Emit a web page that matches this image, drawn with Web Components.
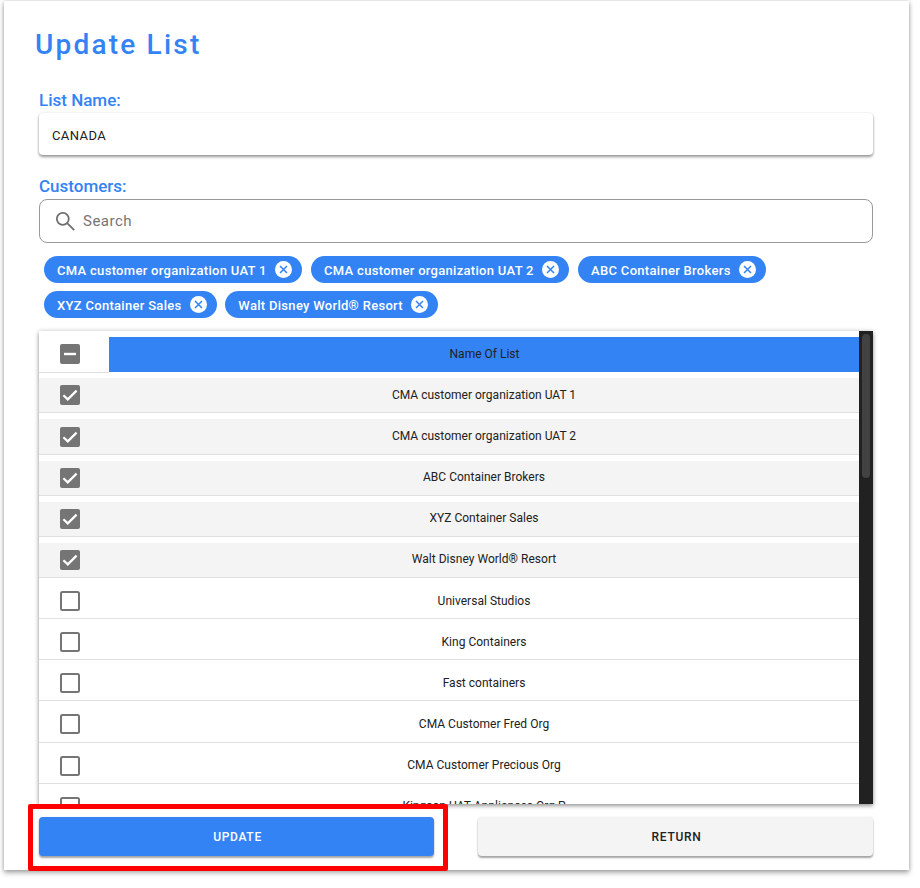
<!DOCTYPE html>
<html>
<head>
<meta charset="utf-8">
<title>Update List</title>
<style>
  html, body { margin: 0; padding: 0; background: #fff; font-family: Roboto, sans-serif; }
</style>
</head>
<body>
<update-panel></update-panel>
<script>
const BLUE = '#3483f5';

class UpdatePanel extends HTMLElement {
  constructor() {
    super();
    this.attachShadow({ mode: 'open' });
    this.shadowRoot.innerHTML = `
      <style>
        :host { display: block; width: 920px; height: 888px; overflow: hidden; position: relative; }
        .paper {
          box-sizing: border-box;
          width: 905px;
          height: 869px;
          margin: 1px 0 0 4px;
          padding: 29px 36px 0 35px;
          background: #fff;
          box-shadow: 0 3px 5px rgba(0,0,0,.3), 0 0 4px rgba(0,0,0,.2);
        }
        h1 {
          margin: 0 0 0 -4px;
          height: 30px;
          line-height: 30px;
          font-size: 28px;
          font-weight: 500;
          letter-spacing: 2.2px;
          color: ${BLUE};
        }
        label {
          display: block;
          font-size: 17px;
          font-weight: 500;
          line-height: 18px;
          color: ${BLUE};
        }
        .name-label { margin-top: 31px; }
        .cust-label { margin-top: 22px; margin-bottom: 4px; }
        .name-field {
          box-sizing: border-box;
          height: 42px;
          margin-top: 4px;
          padding: 2px 13px 0;
          display: flex;
          align-items: center;
          border-radius: 4px;
          background: #fff;
          font-size: 13px;
          letter-spacing: .4px;
          color: #212121;
          box-shadow: 0 2px 3px rgba(0,0,0,.4), 0 0 2px rgba(0,0,0,.12);
        }
        .chips { display: flex; flex-wrap: wrap; gap: 8px 9.3px; padding: 13px 5px 0; }
        .chips .last { margin-left: -.5px; }
        .actions { display: flex; justify-content: space-between; margin-top: 13px; }
        .highlight {
          position: absolute;
          left: 28px;
          top: 804px;
          width: 410px;
          height: 57px;
          border: 5px solid #ff0000;
          border-radius: 2px;
        }
      </style>
      <div class="paper">
        <h1>Update List</h1>
        <label class="name-label">List Name:</label>
        <div class="name-field">CANADA</div>
        <label class="cust-label">Customers:</label>
        <search-box></search-box>
        <div class="chips">
          <customer-chip>CMA customer organization UAT 1</customer-chip>
          <customer-chip>CMA customer organization UAT 2</customer-chip>
          <customer-chip>ABC Container Brokers</customer-chip>
          <customer-chip>XYZ Container Sales</customer-chip>
          <customer-chip class="last">Walt Disney World® Resort</customer-chip>
        </div>
        <customer-table></customer-table>
        <div class="actions">
          <action-button primary>UPDATE</action-button>
          <action-button>RETURN</action-button>
        </div>
      </div>
      <div class="highlight"></div>
    `;
  }
}

class SearchBox extends HTMLElement {
  constructor() {
    super();
    this.attachShadow({ mode: 'open' });
    this.shadowRoot.innerHTML = `
      <style>
        :host {
          display: flex;
          box-sizing: border-box;
          height: 44px;
          align-items: center;
          padding-left: 15px;
          gap: 8px;
          border: 1px solid #9a9a9a;
          border-radius: 8px;
          font-size: 15px;
          letter-spacing: .5px;
          color: #757575;
        }
        svg { display: block; }
      </style>
      <svg width="20" height="20" viewBox="0 0 20 20" fill="none" stroke="#6f6f6f" stroke-width="1.8">
        <circle cx="7.8" cy="7.8" r="6"/>
        <path d="M12.2 12.2 19.2 19.2"/>
      </svg>
      <span>Search</span>
    `;
  }
}

class CustomerChip extends HTMLElement {
  constructor() {
    super();
    this.attachShadow({ mode: 'open' });
    this.shadowRoot.innerHTML = `
      <style>
        :host {
          display: inline-flex;
          box-sizing: border-box;
          height: 27px;
          align-items: center;
          padding: 0 10px 0 13px;
          gap: 8px;
          border-radius: 14px;
          background: ${BLUE};
          color: #fff;
          font-size: 13px;
          font-weight: 500;
          letter-spacing: .3px;
          white-space: nowrap;
        }
        span { padding-top: 1px; }
        svg { display: block; margin-top: -1px; }
      </style>
      <span><slot></slot></span>
      <svg width="17" height="17" viewBox="0 0 17 17">
        <circle cx="8.5" cy="8.5" r="8.5" fill="#fff"/>
        <path d="M5 5 12 12M12 5 5 12" stroke="${BLUE}" stroke-width="1.5" fill="none"/>
      </svg>
    `;
  }
}

class CheckMark extends HTMLElement {
  constructor() {
    super();
    this.attachShadow({ mode: 'open' });
  }
  connectedCallback() {
    const state = this.getAttribute('state');
    let inner = '<rect x="1" y="1" width="18" height="18" rx="1.5" fill="#fff" stroke="#757575" stroke-width="2"/>';
    if (state === 'checked') {
      inner = '<rect width="20" height="20" rx="2" fill="#757575"/><path d="M3.4 10.2 7.8 14.4 16.6 5.6" fill="none" stroke="#fff" stroke-width="2.2"/>';
    } else if (state === 'mixed') {
      inner = '<rect width="20" height="20" rx="2" fill="#757575"/><path d="M4 10H16" fill="none" stroke="#fff" stroke-width="2.4"/>';
    }
    this.shadowRoot.innerHTML = `
      <style>:host { display: block; width: 20px; height: 20px; } svg { display: block; }</style>
      <svg width="20" height="20" viewBox="0 0 20 20">${inner}</svg>
    `;
  }
}

class CustomerTable extends HTMLElement {
  constructor() {
    super();
    this.attachShadow({ mode: 'open' });
    const rows = [
      ['CMA customer organization UAT 1', true],
      ['CMA customer organization UAT 2', true],
      ['ABC Container Brokers', true],
      ['XYZ Container Sales', true],
      ['Walt Disney World® Resort', true],
      ['Universal Studios', false],
      ['King Containers', false],
      ['Fast containers', false],
      ['CMA Customer Fred Org', false],
      ['CMA Customer Precious Org', false],
      ['Kingson UAT Appliances Org P', false],
    ];
    const rowHtml = rows.map(([name, on]) => `
      <div class="row ${on ? 'on' : ''}">
        <div class="box"><check-mark state="${on ? 'checked' : 'empty'}"></check-mark></div>
        <div class="name">${name}</div>
      </div>`).join('');
    this.shadowRoot.innerHTML = `
      <style>
        :host {
          display: flex;
          height: 473px;
          margin-top: 13px;
          overflow: hidden;
          background: #fff;
          box-shadow: 0 2px 4px rgba(0,0,0,.35), 0 0 5px rgba(0,0,0,.15);
          font-size: 12px;
          letter-spacing: .02px;
          color: #212121;
        }
        .list { flex: 1; min-width: 0; overflow: hidden; }
        .head { display: flex; height: 41.3px; padding-top: 6px; box-sizing: border-box; position: relative; z-index: 1; }
        .head .box { height: 36px; padding-bottom: 2px; border-bottom: 1px solid #e0e0e0; }
        .head .title { flex: 1; background: ${BLUE}; display: flex; align-items: center; justify-content: center; height: 35px; padding: 0 0 2px 1px; box-sizing: border-box; letter-spacing: 0; }
        .row { display: flex; box-sizing: border-box; height: 41.15px; padding-top: 6px; border-bottom: 1px solid #e0e0e0; }
        .row.on { background: linear-gradient(#fff 6px, #f4f4f4 6px); }
        .box { width: 70px; padding: 0 0 0 21px; box-sizing: border-box; display: flex; align-items: center; flex: none; }
        .name { flex: 1; display: flex; align-items: center; justify-content: center; white-space: nowrap; padding-bottom: 1px; }
        .track { width: 14px; flex: none; background: #212121; padding: 3px; box-sizing: border-box; }
        .thumb { width: 8px; height: 144px; border-radius: 4px; background: #424242; }
      </style>
      <div class="list">
        <div class="head">
          <div class="box"><check-mark state="mixed"></check-mark></div>
          <div class="title">Name Of List</div>
        </div>
        ${rowHtml}
      </div>
      <div class="track"><div class="thumb"></div></div>
    `;
  }
}

class ActionButton extends HTMLElement {
  constructor() {
    super();
    this.attachShadow({ mode: 'open' });
    this.shadowRoot.innerHTML = `
      <style>
        :host {
          display: flex;
          box-sizing: border-box;
          width: 395px;
          height: 39px;
          padding-left: 2px;
          align-items: center;
          justify-content: center;
          border-radius: 4px;
          background: #f4f4f4;
          color: #212121;
          font-size: 12px;
          font-weight: 500;
          letter-spacing: .7px;
          box-shadow: 0 2px 2px rgba(0,0,0,.35), 0 0 2px rgba(0,0,0,.1);
        }
        :host([primary]) { background: ${BLUE}; color: #fff; }
      </style>
      <slot></slot>
    `;
  }
}

customElements.define('search-box', SearchBox);
customElements.define('customer-chip', CustomerChip);
customElements.define('check-mark', CheckMark);
customElements.define('customer-table', CustomerTable);
customElements.define('action-button', ActionButton);
customElements.define('update-panel', UpdatePanel);
</script>
</body>
</html>
